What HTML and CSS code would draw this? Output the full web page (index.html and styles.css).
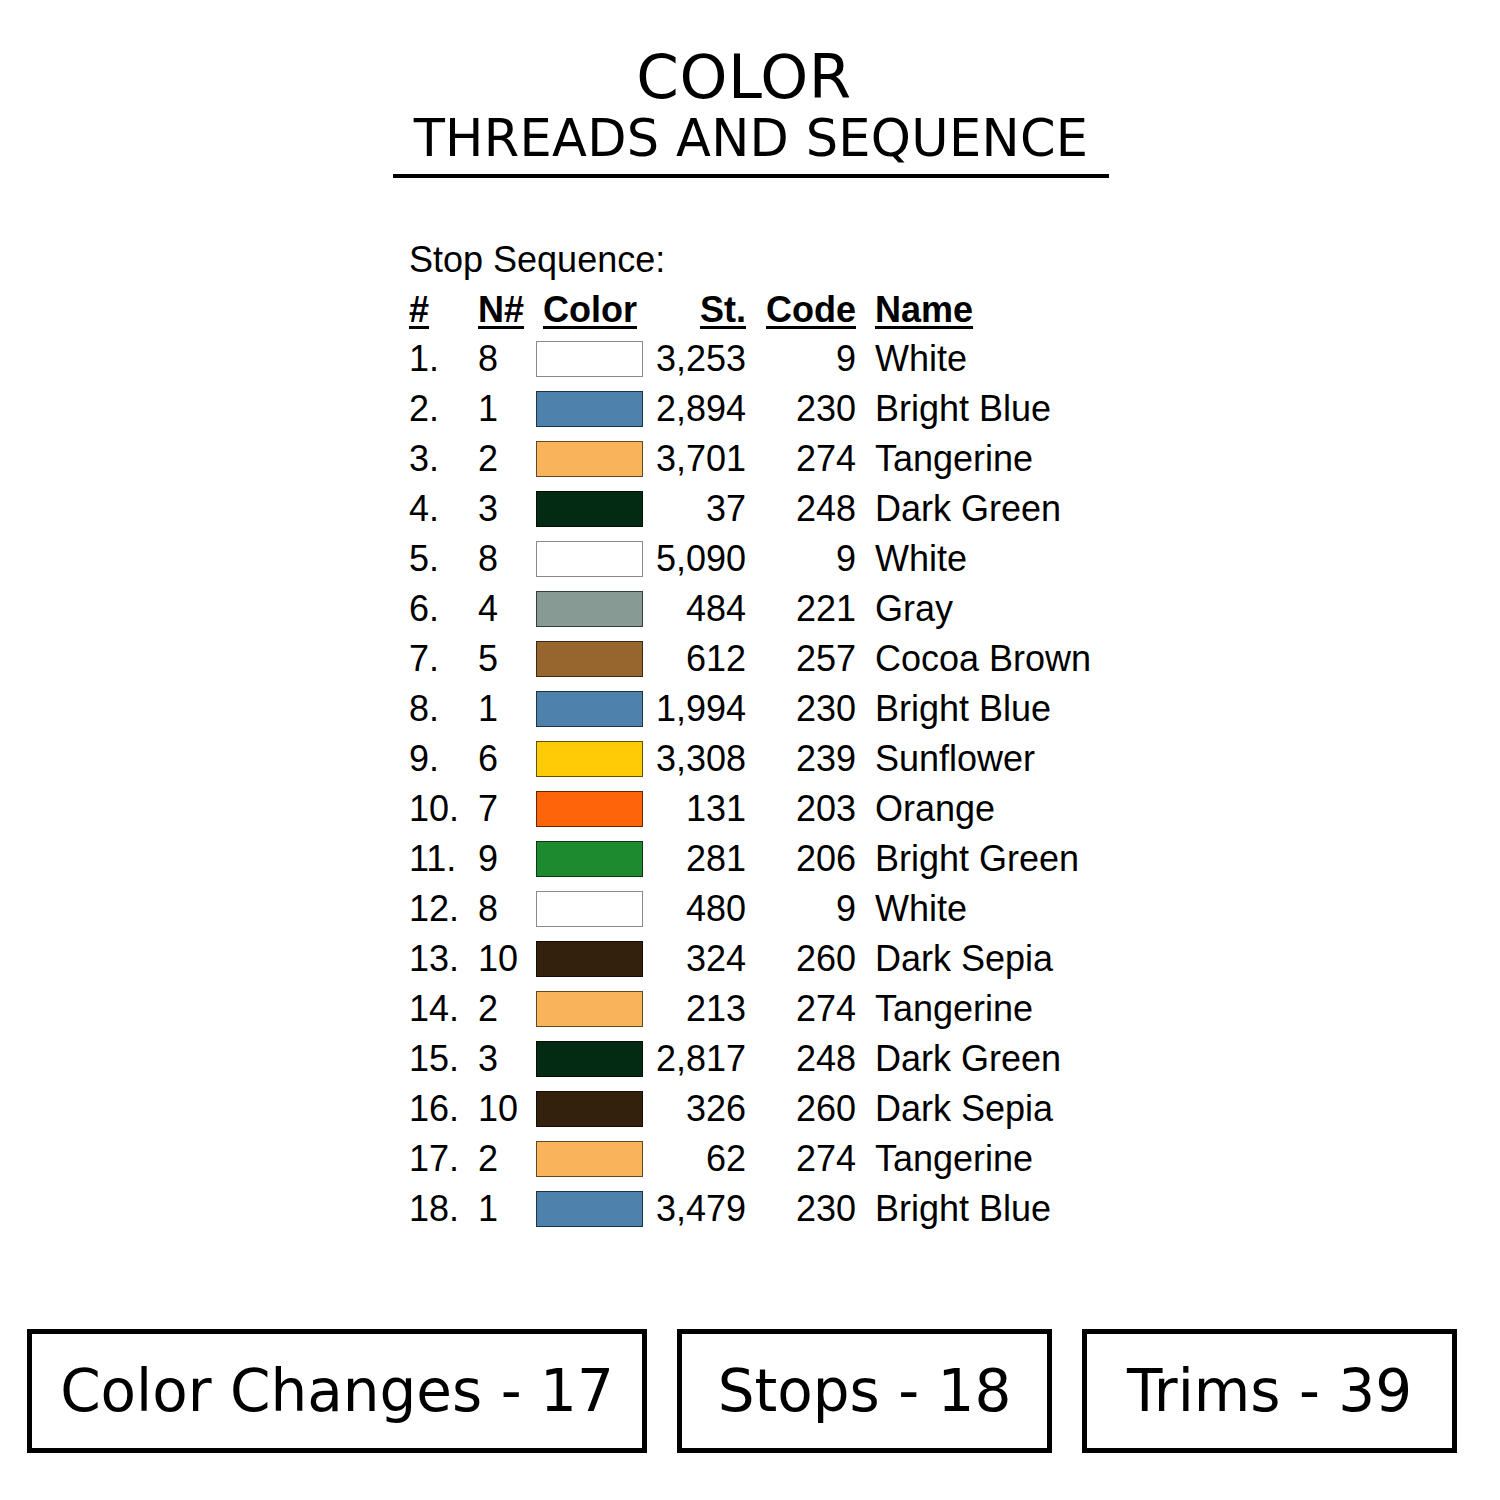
FILE: index.html
```html
<!DOCTYPE html>
<html lang="en">
<head>
<meta charset="utf-8">
<title>Color Threads and Sequence</title>
<link rel="stylesheet" href="styles.css">
</head>
<body>
<div class="page">
  <header class="title">
    <h1 class="title-main">COLOR</h1>
    <h2 class="title-sub">THREADS AND SEQUENCE</h2>
  </header>

  <section class="sequence">
    <div class="caption">Stop Sequence:</div>
    <div class="row head">
      <span class="c-num"><u>#</u></span>
      <span class="c-n"><u>N#</u></span>
      <span class="c-sw head-color"><u>Color</u></span>
      <span class="c-st"><u>St.</u></span>
      <span class="c-code"><u>Code</u></span>
      <span class="c-name"><u>Name</u></span>
    </div>
    <div class="row"><span class="c-num">1.</span><span class="c-n">8</span><span class="c-sw"><i class="sw white"></i></span><span class="c-st">3,253</span><span class="c-code">9</span><span class="c-name">White</span></div>
    <div class="row"><span class="c-num">2.</span><span class="c-n">1</span><span class="c-sw"><i class="sw blue"></i></span><span class="c-st">2,894</span><span class="c-code">230</span><span class="c-name">Bright Blue</span></div>
    <div class="row"><span class="c-num">3.</span><span class="c-n">2</span><span class="c-sw"><i class="sw tangerine"></i></span><span class="c-st">3,701</span><span class="c-code">274</span><span class="c-name">Tangerine</span></div>
    <div class="row"><span class="c-num">4.</span><span class="c-n">3</span><span class="c-sw"><i class="sw dkgreen"></i></span><span class="c-st">37</span><span class="c-code">248</span><span class="c-name">Dark Green</span></div>
    <div class="row"><span class="c-num">5.</span><span class="c-n">8</span><span class="c-sw"><i class="sw white"></i></span><span class="c-st">5,090</span><span class="c-code">9</span><span class="c-name">White</span></div>
    <div class="row"><span class="c-num">6.</span><span class="c-n">4</span><span class="c-sw"><i class="sw gray"></i></span><span class="c-st">484</span><span class="c-code">221</span><span class="c-name">Gray</span></div>
    <div class="row"><span class="c-num">7.</span><span class="c-n">5</span><span class="c-sw"><i class="sw cocoa"></i></span><span class="c-st">612</span><span class="c-code">257</span><span class="c-name">Cocoa Brown</span></div>
    <div class="row"><span class="c-num">8.</span><span class="c-n">1</span><span class="c-sw"><i class="sw blue"></i></span><span class="c-st">1,994</span><span class="c-code">230</span><span class="c-name">Bright Blue</span></div>
    <div class="row"><span class="c-num">9.</span><span class="c-n">6</span><span class="c-sw"><i class="sw sunflower"></i></span><span class="c-st">3,308</span><span class="c-code">239</span><span class="c-name">Sunflower</span></div>
    <div class="row"><span class="c-num">10.</span><span class="c-n">7</span><span class="c-sw"><i class="sw orange"></i></span><span class="c-st">131</span><span class="c-code">203</span><span class="c-name">Orange</span></div>
    <div class="row"><span class="c-num">11.</span><span class="c-n">9</span><span class="c-sw"><i class="sw brgreen"></i></span><span class="c-st">281</span><span class="c-code">206</span><span class="c-name">Bright Green</span></div>
    <div class="row"><span class="c-num">12.</span><span class="c-n">8</span><span class="c-sw"><i class="sw white"></i></span><span class="c-st">480</span><span class="c-code">9</span><span class="c-name">White</span></div>
    <div class="row"><span class="c-num">13.</span><span class="c-n">10</span><span class="c-sw"><i class="sw sepia"></i></span><span class="c-st">324</span><span class="c-code">260</span><span class="c-name">Dark Sepia</span></div>
    <div class="row"><span class="c-num">14.</span><span class="c-n">2</span><span class="c-sw"><i class="sw tangerine"></i></span><span class="c-st">213</span><span class="c-code">274</span><span class="c-name">Tangerine</span></div>
    <div class="row"><span class="c-num">15.</span><span class="c-n">3</span><span class="c-sw"><i class="sw dkgreen"></i></span><span class="c-st">2,817</span><span class="c-code">248</span><span class="c-name">Dark Green</span></div>
    <div class="row"><span class="c-num">16.</span><span class="c-n">10</span><span class="c-sw"><i class="sw sepia"></i></span><span class="c-st">326</span><span class="c-code">260</span><span class="c-name">Dark Sepia</span></div>
    <div class="row"><span class="c-num">17.</span><span class="c-n">2</span><span class="c-sw"><i class="sw tangerine"></i></span><span class="c-st">62</span><span class="c-code">274</span><span class="c-name">Tangerine</span></div>
    <div class="row"><span class="c-num">18.</span><span class="c-n">1</span><span class="c-sw"><i class="sw blue"></i></span><span class="c-st">3,479</span><span class="c-code">230</span><span class="c-name">Bright Blue</span></div>
  </section>

  <footer class="stats">
    <div class="stat stat-wide">Color Changes - 17</div>
    <div class="stat">Stops - 18</div>
    <div class="stat">Trims - 39</div>
  </footer>
</div>
</body>
</html>
```

FILE: styles.css
```css
html, body {
  margin: 0;
  padding: 0;
  background: #ffffff;
}

.page {
  width: 1500px;
  height: 1500px;
  display: flex;
  flex-direction: column;
  color: #000;
}

.title {
  width: 716px;
  margin: 0 0 0 393px;
  padding-top: 47px;
  padding-bottom: 5px;
  border-bottom: 4px solid #000;
  text-align: center;
  font-family: "DejaVu Sans", "Noto Sans", sans-serif;
  font-weight: normal;
}

.title-main {
  margin: 0;
  padding-right: 14px;
  font-size: 61px;
  line-height: 60px;
  font-weight: normal;
  letter-spacing: 0.5px;
}

.title-sub {
  margin: 2px 0 0 0;
  font-size: 51px;
  line-height: 60px;
  font-weight: normal;
  letter-spacing: 0.3px;
}

.sequence {
  margin: 57px 0 0 409px;
  font-family: "Liberation Sans", Arial, sans-serif;
  font-size: 36px;
}

.caption {
  height: 50px;
  line-height: 50px;
  margin-bottom: 1px;
}

.row {
  display: grid;
  grid-template-columns: 69px 58px 107px 103px 110px auto;
  align-items: center;
  height: 50px;
  line-height: 50px;
  white-space: nowrap;
}

.row.head {
  height: 48px;
  line-height: 48px;
  font-weight: bold;
}

.row.head u {
  text-decoration: underline;
  text-decoration-thickness: 3px;
  text-underline-offset: 4px;
}

.head-color {
  padding-left: 7px;
}

.c-st, .c-code {
  text-align: right;
}

.c-name {
  padding-left: 19px;
}

.c-sw {
  display: flex;
  align-items: center;
}

.sw {
  display: block;
  box-sizing: border-box;
  width: 107px;
  height: 36px;
  margin-top: -1px;
  border: 1.5px solid rgba(0, 0, 0, 0.6);
}

.sw.white { background: #ffffff; border-color: #8a8a8a; }
.sw.blue { background: #4e82ad; }
.sw.tangerine { background: #f9b35b; }
.sw.dkgreen { background: #032a13; }
.sw.gray { background: #879b94; }
.sw.cocoa { background: #97662e; }
.sw.sunflower { background: #fecb06; }
.sw.orange { background: #fe6409; }
.sw.brgreen { background: #1d8a30; }
.sw.sepia { background: #33200d; }

.stats {
  display: flex;
  margin: auto 0 0 27px;
  padding-bottom: 47px;
  gap: 30px;
}

.stat {
  box-sizing: border-box;
  width: 375px;
  height: 124px;
  border: 5px solid #000;
  display: flex;
  align-items: center;
  justify-content: center;
  font-family: "DejaVu Sans", "Noto Sans", sans-serif;
  font-size: 58px;
}

.stat-wide {
  width: 620px;
}
```
